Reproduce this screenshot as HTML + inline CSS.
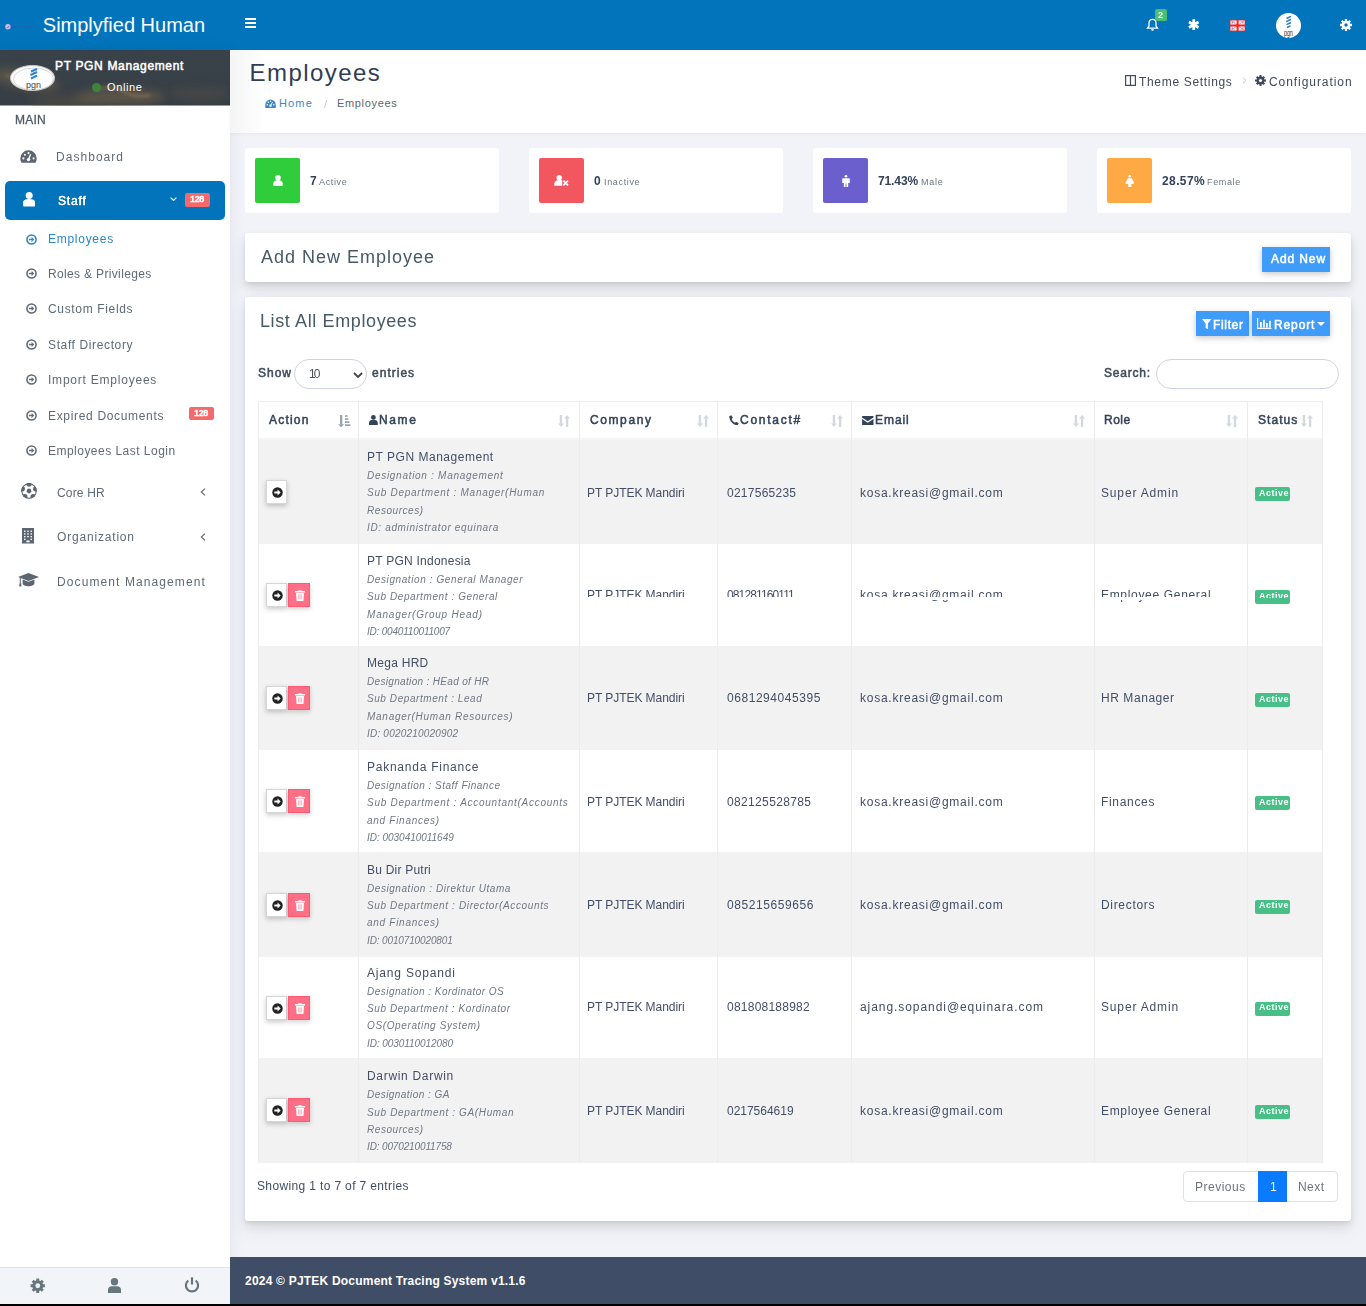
<!DOCTYPE html>
<html><head><meta charset="utf-8"><style>
*{box-sizing:border-box;margin:0;padding:0}
html,body{width:1366px;height:1306px;overflow:hidden;background:#000}
body{font-family:"Liberation Sans",sans-serif;position:relative}
.abs{position:absolute}
.t{position:absolute;white-space:nowrap;will-change:transform}
.lcd{will-change:auto}
svg{display:block}
#page{position:absolute;left:0;top:0;width:1366px;height:1304px;background:#f2f3f8;overflow:hidden}
.card{position:absolute;background:#fff;border-radius:3px}
.shadow{box-shadow:0 5px 9px rgba(90,97,105,.14),0 10px 18px rgba(90,97,105,.08),0 2px 3px rgba(90,97,105,.1)}
.vbtn{position:absolute;width:21px;height:24px;background:#fff;border:1px solid #d6d6d6;box-shadow:0 2px 5px rgba(0,0,0,.22)}
.dbtn{position:absolute;width:22px;height:24px;background:#ff6f85;border:1px solid #ff5a72;box-shadow:0 2px 5px rgba(0,0,0,.18)}
.badge{position:absolute;width:35px;height:14px;background:#48bf87;border-radius:2px}
.bluebtn{position:absolute;background:#3f9cfb;box-shadow:0 2px 6px rgba(0,0,0,.22)}
</style></head>
<body><div id="page">
<div class="abs" style="left:0;top:0;width:1366px;height:50px;background:#0174bb"></div>
<svg class="abs" style="left:4px;top:23px" width="34" height="8" viewBox="0 0 34 8"><circle cx="3.9" cy="3.8" r="2.7" fill="#cdb9e6"/><path d="M2.6 3.9l1 1 1.8-2" stroke="#7b5cc0" stroke-width=".8" fill="none"/><path d="M8 4.2h24" stroke="#5b4a9c" stroke-width="1.6" stroke-dasharray="1.5 .8" opacity=".7"/></svg>
<div class="t lcd" style="left:42.8px;top:9.87px;font-size:20px;line-height:30px;font-weight:400;color:#fff;">Simplyfied Human</div>
<svg class="abs" style="left:245px;top:18px" width="11" height="10" viewBox="0 0 11 10"><rect y="0" width="11" height="2" fill="#fff"/><rect y="4" width="11" height="2" fill="#fff"/><rect y="8" width="11" height="2" fill="#fff"/></svg>
<svg class="abs" style="left:1146px;top:18px" width="13" height="13" viewBox="0 0 13 13"><path d="M6.5 1.3c2.2 0 3.5 1.7 3.5 3.7v3.1l1.5 2H1.5l1.5-2V5c0-2 1.3-3.7 3.5-3.7z" fill="none" stroke="#fff" stroke-width="1.3"/><path d="M5 11.3a1.5 1.5 0 0 0 3 0z" fill="#fff"/></svg>
<div class="abs" style="left:1155px;top:9px;width:12px;height:12px;background:#4dbd74;border-radius:2px"></div>
<div class="t" style="left:1158.4px;top:8.48px;font-size:9px;line-height:14px;font-weight:700;letter-spacing:0.125px;color:#fff;">2</div>
<svg class="abs" style="left:1188.3px;top:18.8px" width="11.5" height="11.5" viewBox="0 0 12 12"><path d="M6 0.3v11.4M1 3.1l10 5.8M1 8.9l10-5.8" stroke="#fff" stroke-width="2.8"/></svg>
<svg class="abs" style="left:1230.2px;top:19.9px" width="15.2" height="11" viewBox="0 0 15.2 11"><rect width="15.2" height="11" fill="#f4f6ff"/><g fill="#7f9ae8"><path d="M1.8 1.6h3.4l-3.4 2.4z"/><path d="M13.4 1.6h-3.4l3.4 2.4z"/><path d="M1.8 9.4h3.4l-3.4-2.4z"/><path d="M13.4 9.4h-3.4l3.4-2.4z"/></g><path d="M0 0L15.2 11M15.2 0L0 11" stroke="#ff8a8a" stroke-width="1"/><path d="M7.6 0v11M0 5.5h15.2" stroke="#ff2020" stroke-width="2"/><rect x=".4" y=".4" width="14.4" height="10.2" fill="none" stroke="#d04040" stroke-width=".8" opacity=".6"/></svg>
<div class="abs" style="left:1276px;top:13px;width:25px;height:25px;border-radius:50%;background:#fff;overflow:hidden"><svg width="25" height="25" viewBox="0 0 25 25"><path d="M10.5 5.5l4.5-2.2M10.2 8.6l4.8-2.3M10.5 11.7l4.5-2.2M11 14.5l3.5-1.7" stroke="#2a7cc4" stroke-width="1.5" fill="none"/><text x="12.5" y="22.8" font-size="9.5" text-anchor="middle" fill="#333" font-family="Liberation Sans" textLength="9" lengthAdjust="spacingAndGlyphs">pgn</text></svg></div>
<svg class="abs" style="left:1340px;top:19px" width="12" height="12" viewBox="0 0 12 12"><circle cx="6" cy="6" r="4.3" fill="#fff"/><path d="M6 0v12M0 6h12M1.8 1.8l8.4 8.4M10.2 1.8l-8.4 8.4" stroke="#fff" stroke-width="2.3"/><circle cx="6" cy="6" r="1.7" fill="#0174bb"/></svg>
<div class="abs" style="left:0;top:50px;width:230px;height:1254px;background:#fff;box-shadow:1px 0 14px rgba(0,0,0,.07)"></div>
<svg class="abs" style="left:0;top:50px" width="230" height="55.5" viewBox="0 0 230 55.5">
<defs><linearGradient id="sky" x1="0" y1="0" x2="0" y2="1"><stop offset="0" stop-color="#3a4249"/><stop offset=".5" stop-color="#394148"/><stop offset="1" stop-color="#363d44"/></linearGradient>
<filter id="bl" x="-50%" y="-50%" width="200%" height="200%"><feGaussianBlur stdDeviation="4"/></filter>
<filter id="bl2" x="-50%" y="-50%" width="200%" height="200%"><feGaussianBlur stdDeviation="1.5"/></filter></defs>
<rect width="230" height="55.5" fill="url(#sky)"/>
<g filter="url(#bl)">
<ellipse cx="25" cy="30" rx="35" ry="9" fill="#6e6048" opacity=".55" transform="rotate(12 25 30)"/>
<ellipse cx="120" cy="47" rx="45" ry="8" fill="#77654a" opacity=".55"/>
<ellipse cx="70" cy="52" rx="40" ry="6" fill="#5e5444" opacity=".5"/>
<ellipse cx="200" cy="44" rx="30" ry="7" fill="#4f4e4c" opacity=".5"/>
</g>
<g filter="url(#bl2)" opacity=".45">
<path d="M95 40 q15 -6 30 2 q10 6 25 3" stroke="#9c8458" stroke-width="3" fill="none"/>
<path d="M5 25 q20 4 35 14" stroke="#8a7652" stroke-width="2.5" fill="none"/>
</g></svg>
<div class="abs" style="left:10px;top:65px;width:45px;height:26px;border-radius:50%;background:#fff;border:1px solid #c8c8c8;overflow:hidden"><svg width="45" height="26" viewBox="0 0 45 26"><ellipse cx="22.5" cy="13" rx="20" ry="11" fill="none" stroke="#999" stroke-width=".4"/><path d="M20 5.5l6-2.5M19.5 9l6.5-3M20 12.5l6-2.8" stroke="#2a84d0" stroke-width="2" fill="none"/><text x="22.5" y="21.5" font-size="9" text-anchor="middle" fill="#444" font-family="Liberation Sans" textLength="15" lengthAdjust="spacingAndGlyphs">pgn</text></svg></div>
<div class="t lcd" style="left:55.0px;top:56.84px;font-size:12px;line-height:18px;font-weight:400;-webkit-text-stroke:0.5px #fff;letter-spacing:0.658px;color:#fff;">PT PGN Management</div>
<div class="abs" style="left:92px;top:82.5px;width:9px;height:9px;border-radius:50%;background:#3b843a"></div>
<div class="t lcd" style="left:107.0px;top:79.19px;font-size:11px;line-height:16px;font-weight:400;letter-spacing:0.634px;color:#fff;">Online</div>
<div class="t" style="left:15.0px;top:111.24px;font-size:12px;line-height:18px;font-weight:400;-webkit-text-stroke:0.3px #4f5b66;letter-spacing:0.260px;color:#4f5b66;">MAIN</div>
<svg class="abs" style="left:20px;top:149.5px" width="17" height="13" viewBox="0 0 17 13"><path d="M8.5 0.3A8.2 8.2 0 0 0 0.3 8.5c0 1.6.4 3 1.2 4.2h14c.8-1.2 1.2-2.6 1.2-4.2A8.2 8.2 0 0 0 8.5 0.3z" fill="#5b6670"/><circle cx="8.5" cy="9.6" r="1.7" fill="#fff"/><path d="M8.5 9.6L10.6 4.2" stroke="#fff" stroke-width="1.3"/><circle cx="3.4" cy="8.4" r="1.05" fill="#fff"/><circle cx="4.9" cy="4.7" r="1.05" fill="#fff"/><circle cx="8.5" cy="3.1" r="1.05" fill="#fff"/><circle cx="13.6" cy="8.4" r="1.05" fill="#fff"/></svg>
<div class="t" style="left:56.4px;top:148.24px;font-size:12px;line-height:18px;font-weight:400;letter-spacing:1.041px;color:#5e6b75;">Dashboard</div>
<div class="abs" style="left:5px;top:181px;width:220px;height:38.5px;background:#0174bb;border-radius:5px"></div>
<svg class="abs" style="left:22.6px;top:192px" width="12.4" height="14.5" viewBox="0 0 12.4 14.5"><circle cx="6.2" cy="3.6" r="3.5" fill="#fff"/><path d="M0 13.2V10.6C0 8.2 2.6 7 6.2 7S12.4 8.2 12.4 10.6V13.2A1.3 1.3 0 0 1 11.1 14.5H1.3A1.3 1.3 0 0 1 0 13.2z" fill="#fff"/></svg>
<div class="t" style="left:57.6px;top:191.54px;font-size:12px;line-height:18px;font-weight:400;-webkit-text-stroke:0.3px #fff;letter-spacing:0.840px;color:#fff;text-shadow:0 0 .4px #fff;">Staff</div>
<svg class="abs" style="left:170px;top:197px" width="7" height="5" viewBox="0 0 7 5"><path d="M.6.6l2.9 2.9L6.4.6" stroke="#fff" stroke-width="1.2" fill="none"/></svg>
<div class="abs" style="left:185px;top:193px;width:25px;height:13.5px;background:#f46a6a;border-radius:2px"></div>
<div class="t" style="left:190.0px;top:191.88px;font-size:9px;line-height:14px;font-weight:700;letter-spacing:-0.336px;color:#fff;-webkit-text-stroke:.3px #fff;">128</div>
<svg class="abs" style="left:25.5px;top:233.5px" width="11" height="11" viewBox="0 0 12 12"><circle cx="6" cy="6" r="5" fill="none" stroke="#2a86c8" stroke-width="1.7"/><path d="M3.2 5.2h2.9V3.2L9 6 6.1 8.8V6.8H3.2z" fill="#2a86c8"/></svg>
<div class="t" style="left:48.2px;top:230.24px;font-size:12px;line-height:18px;font-weight:400;letter-spacing:0.725px;color:#2a86c8;">Employees</div>
<svg class="abs" style="left:25.5px;top:268.4px" width="11" height="11" viewBox="0 0 12 12"><circle cx="6" cy="6" r="5" fill="none" stroke="#5e6b75" stroke-width="1.7"/><path d="M3.2 5.2h2.9V3.2L9 6 6.1 8.8V6.8H3.2z" fill="#5e6b75"/></svg>
<div class="t" style="left:48.2px;top:265.14px;font-size:12px;line-height:18px;font-weight:400;letter-spacing:0.342px;color:#5e6b75;">Roles &amp; Privileges</div>
<svg class="abs" style="left:25.5px;top:303.3px" width="11" height="11" viewBox="0 0 12 12"><circle cx="6" cy="6" r="5" fill="none" stroke="#5e6b75" stroke-width="1.7"/><path d="M3.2 5.2h2.9V3.2L9 6 6.1 8.8V6.8H3.2z" fill="#5e6b75"/></svg>
<div class="t" style="left:48.2px;top:300.04px;font-size:12px;line-height:18px;font-weight:400;letter-spacing:0.659px;color:#5e6b75;">Custom Fields</div>
<svg class="abs" style="left:25.5px;top:339.1px" width="11" height="11" viewBox="0 0 12 12"><circle cx="6" cy="6" r="5" fill="none" stroke="#5e6b75" stroke-width="1.7"/><path d="M3.2 5.2h2.9V3.2L9 6 6.1 8.8V6.8H3.2z" fill="#5e6b75"/></svg>
<div class="t" style="left:48.2px;top:335.84px;font-size:12px;line-height:18px;font-weight:400;letter-spacing:0.624px;color:#5e6b75;">Staff Directory</div>
<svg class="abs" style="left:25.5px;top:374.1px" width="11" height="11" viewBox="0 0 12 12"><circle cx="6" cy="6" r="5" fill="none" stroke="#5e6b75" stroke-width="1.7"/><path d="M3.2 5.2h2.9V3.2L9 6 6.1 8.8V6.8H3.2z" fill="#5e6b75"/></svg>
<div class="t" style="left:48.2px;top:370.84px;font-size:12px;line-height:18px;font-weight:400;letter-spacing:0.775px;color:#5e6b75;">Import Employees</div>
<svg class="abs" style="left:25.5px;top:410.0px" width="11" height="11" viewBox="0 0 12 12"><circle cx="6" cy="6" r="5" fill="none" stroke="#5e6b75" stroke-width="1.7"/><path d="M3.2 5.2h2.9V3.2L9 6 6.1 8.8V6.8H3.2z" fill="#5e6b75"/></svg>
<div class="t" style="left:48.2px;top:406.74px;font-size:12px;line-height:18px;font-weight:400;letter-spacing:0.671px;color:#5e6b75;">Expired Documents</div>
<svg class="abs" style="left:25.5px;top:444.9px" width="11" height="11" viewBox="0 0 12 12"><circle cx="6" cy="6" r="5" fill="none" stroke="#5e6b75" stroke-width="1.7"/><path d="M3.2 5.2h2.9V3.2L9 6 6.1 8.8V6.8H3.2z" fill="#5e6b75"/></svg>
<div class="t" style="left:48.2px;top:441.64px;font-size:12px;line-height:18px;font-weight:400;letter-spacing:0.475px;color:#5e6b75;">Employees Last Login</div>
<div class="abs" style="left:189px;top:407.4px;width:25px;height:12.5px;background:#f46a6a;border-radius:2px"></div>
<div class="t" style="left:194.0px;top:405.68px;font-size:9px;line-height:14px;font-weight:700;letter-spacing:-0.336px;color:#fff;-webkit-text-stroke:.3px #fff;">128</div>
<svg class="abs" style="left:20.6px;top:483px" width="16" height="16" viewBox="0 0 16 16"><defs><clipPath id="ball"><circle cx="8" cy="8" r="7.9"/></clipPath></defs><g clip-path="url(#ball)"><circle cx="8" cy="8" r="8" fill="#5b6670"/><circle cx="8" cy="8" r="6.7" fill="#fff"/><polygon points="8.00,10.70 5.43,8.83 6.41,5.82 9.59,5.82 10.57,8.83" fill="#5b6670"/><circle cx="8.00" cy="1.00" r="2.6" fill="#5b6670"/><circle cx="14.66" cy="5.84" r="2.6" fill="#5b6670"/><circle cx="12.11" cy="13.66" r="2.6" fill="#5b6670"/><circle cx="3.89" cy="13.66" r="2.6" fill="#5b6670"/><circle cx="1.34" cy="5.84" r="2.6" fill="#5b6670"/></g></svg>
<div class="t" style="left:57.3px;top:484.14px;font-size:12px;line-height:18px;font-weight:400;letter-spacing:0.164px;color:#5e6b75;">Core HR</div>
<svg class="abs" style="left:200px;top:488px" width="6" height="8" viewBox="0 0 6 8"><path d="M5 .6L1.3 4 5 7.4" stroke="#5b6670" stroke-width="1.1" fill="none"/></svg>
<svg class="abs" style="left:22px;top:528.3px" width="12" height="15.5" viewBox="0 0 12 15.5"><rect width="12" height="15.5" fill="#5b6670"/><g fill="#fff"><rect x="2" y="2.6" width="1.5" height="1.3"/><rect x="5.2" y="2.6" width="1.5" height="1.3"/><rect x="8.5" y="2.6" width="1.5" height="1.3"/><rect x="2" y="5.3" width="1.5" height="1.3"/><rect x="5.2" y="5.3" width="1.5" height="1.3"/><rect x="8.5" y="5.3" width="1.5" height="1.3"/><rect x="2" y="8" width="1.5" height="1.3"/><rect x="5.2" y="8" width="1.5" height="1.3"/><rect x="8.5" y="8" width="1.5" height="1.3"/><rect x="2" y="10.7" width="1.5" height="1.3"/><rect x="8.5" y="10.7" width="1.5" height="1.3"/><rect x="4.3" y="12.4" width="3.4" height="1.8" rx=".6"/></g></svg>
<div class="t" style="left:57.3px;top:528.44px;font-size:12px;line-height:18px;font-weight:400;letter-spacing:0.817px;color:#5e6b75;">Organization</div>
<svg class="abs" style="left:200px;top:532.5px" width="6" height="8" viewBox="0 0 6 8"><path d="M5 .6L1.3 4 5 7.4" stroke="#5b6670" stroke-width="1.1" fill="none"/></svg>
<svg class="abs" style="left:18px;top:573px" width="21" height="14" viewBox="0 0 21 14"><path d="M10.5 0L21 4l-10.5 4L0 4z" fill="#5b6670"/><path d="M4.6 6.4v3.8c0 1.8 2.8 3 5.9 3s5.9-1.2 5.9-3V6.4l-5.9 2.3z" fill="#5b6670"/><path d="M2.3 4.6v6.2" stroke="#5b6670" stroke-width="1"/><rect x="1.3" y="10.5" width="2" height="3" fill="#5b6670"/></svg>
<div class="abs" style="left:0;top:570px;width:205px;height:22px;overflow:hidden">
<div class="t" style="left:57.3px;top:2.64px;font-size:12px;line-height:18px;font-weight:400;letter-spacing:1.097px;color:#5e6b75;">Document Management</div>
</div>
<div class="abs" style="left:0;top:1267px;width:230px;height:37px;background:#f1f4f8;border-top:1px solid #e1e5ea"></div>
<svg class="abs" style="left:30.3px;top:1278px" width="15.5" height="15.5" viewBox="0 0 16 16"><circle cx="8" cy="8" r="5.6" fill="#67757c"/><path d="M8 0.6v14.8M0.6 8h14.8M2.8 2.8l10.4 10.4M13.2 2.8L2.8 13.2" stroke="#67757c" stroke-width="3"/><circle cx="8" cy="8" r="2.5" fill="#f1f4f8"/></svg>
<svg class="abs" style="left:108px;top:1278px" width="13" height="15" viewBox="0 0 13 15"><circle cx="6.5" cy="3.7" r="3.7" fill="#67757c"/><path d="M0 15v-3.2C0 9.5 1.8 8.3 3.6 8.3h5.8c1.8 0 3.6 1.2 3.6 3.5V15z" fill="#67757c"/></svg>
<svg class="abs" style="left:183.8px;top:1277px" width="16" height="16" viewBox="0 0 16 16"><path d="M4.3 3.5A6.1 6.1 0 1 0 11.7 3.5" stroke="#67757c" stroke-width="2.2" fill="none"/><path d="M8 0.3v7.2" stroke="#67757c" stroke-width="2.2"/></svg>
<div class="abs" style="left:230px;top:50px;width:1136px;height:83px;background:#fff;box-shadow:0 1px 3px rgba(0,0,0,.05)"></div>
<div class="t lcd" style="left:249.5px;top:55.08px;font-size:24px;line-height:36px;font-weight:400;letter-spacing:1.449px;color:#2f3d55;">Employees</div>
<div class="abs" style="left:230px;top:50px;width:34px;height:83px;background:linear-gradient(to right,rgba(40,45,60,.05),rgba(40,45,60,0))"></div>
<svg class="abs" style="left:265px;top:98.5px" width="11" height="9.5" viewBox="0 0 12 10"><path d="M6 0.4A5.7 5.7 0 0 0 0.3 6.1V9.6H11.7V6.1A5.7 5.7 0 0 0 6 0.4z" fill="#3a87c8"/><circle cx="6" cy="7.1" r="1.3" fill="#fff"/><path d="M6 7.1L8.2 3.2" stroke="#fff" stroke-width="1"/><circle cx="2.5" cy="6.1" r=".85" fill="#fff"/><circle cx="3.6" cy="3.3" r=".85" fill="#fff"/><circle cx="6" cy="2.3" r=".85" fill="#fff"/><circle cx="9.5" cy="6.1" r=".85" fill="#fff"/></svg>
<div class="t lcd" style="left:279.0px;top:95.19px;font-size:11px;line-height:16px;font-weight:400;letter-spacing:1.156px;color:#3a87c8;">Home</div>
<div class="t" style="left:324.0px;top:95.69px;font-size:11px;line-height:16px;font-weight:400;letter-spacing:2.188px;color:#c3c9d0;">/</div>
<div class="t lcd" style="left:337.0px;top:95.19px;font-size:11px;line-height:16px;font-weight:400;letter-spacing:0.664px;color:#5b6670;">Employees</div>
<svg class="abs" style="left:1124.5px;top:74.5px" width="11" height="11" viewBox="0 0 11 11"><rect x=".6" y=".6" width="9.8" height="9.8" fill="none" stroke="#3e4b5b" stroke-width="1.2"/><path d="M5.5 .6v9.8" stroke="#3e4b5b" stroke-width="1.2"/></svg>
<div class="t" style="left:1139.0px;top:72.54px;font-size:12px;line-height:18px;font-weight:400;letter-spacing:0.678px;color:#3e4b5b;">Theme Settings</div>
<svg class="abs" style="left:1241.5px;top:77px" width="5" height="7" viewBox="0 0 5 7"><path d="M.8.6L4 3.5.8 6.4" stroke="#c3c9d0" stroke-width="1" fill="none"/></svg>
<svg class="abs" style="left:1254.5px;top:74.5px" width="11" height="11" viewBox="0 0 12 12"><circle cx="6" cy="6" r="4.3" fill="#3e4b5b"/><path d="M6 0v12M0 6h12M1.8 1.8l8.4 8.4M10.2 1.8l-8.4 8.4" stroke="#3e4b5b" stroke-width="2.3"/><circle cx="6" cy="6" r="1.7" fill="#fff"/></svg>
<div class="t" style="left:1268.8px;top:72.54px;font-size:12px;line-height:18px;font-weight:400;letter-spacing:0.934px;color:#3e4b5b;">Configuration</div>
<div class="card" style="left:245px;top:148px;width:254px;height:65px"></div>
<div class="abs" style="left:255px;top:158px;width:45px;height:45px;border-radius:2px;background:#2fcc3b"><svg class="abs" style="left:18px;top:17px" width="10" height="11" viewBox="0 0 10 11"><circle cx="5" cy="2.8" r="2.8" fill="#fff"/><path d="M0.3 11V8.6C0.3 6.4 2.4 5.1 5 5.1S9.7 6.4 9.7 8.6V11z" fill="#fff"/></svg></div>
<div class="t" style="left:310.1px;top:171.74px;font-size:12px;line-height:18px;font-weight:700;letter-spacing:-0.266px;color:#34425a;">7</div>
<div class="t" style="left:319.2px;top:174.78px;font-size:9px;line-height:14px;font-weight:400;letter-spacing:0.628px;color:#6c757d;">Active</div>
<div class="card" style="left:529px;top:148px;width:254px;height:65px"></div>
<div class="abs" style="left:539px;top:158px;width:45px;height:45px;border-radius:2px;background:#f2565f"><svg class="abs" style="left:15px;top:17px" width="15" height="11" viewBox="0 0 15 11"><circle cx="5.2" cy="2.7" r="2.7" fill="#fff"/><path d="M0.3 10.8V8.4C0.3 6.3 2.4 5 5 5S8.2 5.4 8.2 5.4V10.8z" fill="#fff"/><path d="M9.4 5.6l4.6 4.8M14 5.6l-4.6 4.8" stroke="#fff" stroke-width="1.7"/></svg></div>
<div class="t" style="left:594.4px;top:171.74px;font-size:12px;line-height:18px;font-weight:700;letter-spacing:1.141px;color:#34425a;">0</div>
<div class="t" style="left:604.4px;top:174.78px;font-size:9px;line-height:14px;font-weight:400;letter-spacing:0.658px;color:#6c757d;">Inactive</div>
<div class="card" style="left:813px;top:148px;width:254px;height:65px"></div>
<div class="abs" style="left:823px;top:158px;width:45px;height:45px;border-radius:2px;background:#6a5fcc"><svg class="abs" style="left:18.5px;top:16.8px" width="8" height="12.2" viewBox="0 0 8 12.2"><circle cx="4" cy="1.2" r="1.3" fill="#fff"/><path d="M1 3.2h6a.8.8 0 0 1 .8.8V8H6.2V12.1H4.4V8.6H3.6V12.1H1.8V8H.2V4a.8.8 0 0 1 .8-.8z" fill="#fff"/></svg></div>
<div class="t" style="left:878.0px;top:171.74px;font-size:12px;line-height:18px;font-weight:700;letter-spacing:-0.113px;color:#34425a;">71.43%</div>
<div class="t" style="left:921.0px;top:174.78px;font-size:9px;line-height:14px;font-weight:400;letter-spacing:0.708px;color:#6c757d;">Male</div>
<div class="card" style="left:1097px;top:148px;width:254px;height:65px"></div>
<div class="abs" style="left:1107px;top:158px;width:45px;height:45px;border-radius:2px;background:#ffa944"><svg class="abs" style="left:17.8px;top:16.8px" width="9.6" height="12.4" viewBox="0 0 9.6 12.4"><circle cx="4.8" cy="1.2" r="1.3" fill="#fff"/><path d="M3 3.2h3.6l3 5.2H7.8l.6 .6H6.3v3.3H3.3V9H1.2l.6-.6H0z" fill="#fff"/></svg></div>
<div class="t" style="left:1161.8px;top:171.74px;font-size:12px;line-height:18px;font-weight:700;letter-spacing:0.397px;color:#34425a;">28.57%</div>
<div class="t" style="left:1207.4px;top:174.78px;font-size:9px;line-height:14px;font-weight:400;letter-spacing:0.650px;color:#6c757d;">Female</div>
<div class="card shadow" style="left:245px;top:233px;width:1106px;height:49px"></div>
<div class="t" style="left:260.5px;top:243.86px;font-size:18px;line-height:27px;font-weight:400;letter-spacing:0.994px;color:#455a64;">Add New Employee</div>
<div class="bluebtn" style="left:1262px;top:247px;width:68px;height:25px"></div>
<div class="t" style="left:1271.0px;top:250.24px;font-size:12px;line-height:18px;font-weight:400;-webkit-text-stroke:0.5px #fff;letter-spacing:0.896px;color:#fff;">Add New</div>
<div class="card shadow" style="left:245px;top:297px;width:1106px;height:924px"></div>
<div class="t" style="left:260.2px;top:308.26px;font-size:18px;line-height:27px;font-weight:400;letter-spacing:0.613px;color:#455a64;">List All Employees</div>
<div class="bluebtn" style="left:1196px;top:311px;width:53px;height:25px"></div>
<svg class="abs" style="left:1202px;top:318.5px" width="9.5" height="10.5" viewBox="0 0 10 11"><path d="M0 0h10L6.2 4.8V11L3.8 9.2V4.8z" fill="#fff"/></svg>
<div class="t" style="left:1213.3px;top:315.54px;font-size:12px;line-height:18px;font-weight:400;-webkit-text-stroke:0.5px #fff;letter-spacing:0.656px;color:#fff;">Filter</div>
<div class="bluebtn" style="left:1252px;top:311px;width:78px;height:25px"></div>
<svg class="abs" style="left:1257px;top:318px" width="14.5" height="11" viewBox="0 0 14.5 11"><path d="M.6 0v10.4H14.5" stroke="#fff" stroke-width="1.2" fill="none"/><rect x="3" y="4" width="1.8" height="5.6" fill="#fff"/><rect x="6" y="1.8" width="1.8" height="7.8" fill="#fff"/><rect x="9" y="5" width="1.8" height="4.6" fill="#fff"/><rect x="12" y="2.8" width="1.8" height="6.8" fill="#fff"/></svg>
<div class="t" style="left:1274.4px;top:315.54px;font-size:12px;line-height:18px;font-weight:400;-webkit-text-stroke:0.5px #fff;letter-spacing:0.875px;color:#fff;">Report</div>
<svg class="abs" style="left:1317px;top:322px" width="8" height="4" viewBox="0 0 8 4"><path d="M0 0h8L4 4z" fill="#fff"/></svg>
<div class="t" style="left:258.0px;top:363.74px;font-size:12px;line-height:18px;font-weight:400;-webkit-text-stroke:0.5px #3e4b5b;letter-spacing:1.000px;color:#3e4b5b;">Show</div>
<div class="abs" style="left:293.5px;top:359.3px;width:73.5px;height:29.3px;border:1px solid #cdd3e0;border-radius:15px;background:#fff"></div>
<div class="t" style="left:308.6px;top:365.14px;font-size:12px;line-height:18px;font-weight:400;letter-spacing:-1.969px;color:#495057;">10</div>
<svg class="abs" style="left:353px;top:371.5px" width="10" height="6.5" viewBox="0 0 10 6.5"><path d="M1 1l4 4 4-4" stroke="#444" stroke-width="1.8" fill="none"/></svg>
<div class="t" style="left:371.5px;top:363.74px;font-size:12px;line-height:18px;font-weight:400;-webkit-text-stroke:0.5px #3e4b5b;letter-spacing:1.016px;color:#3e4b5b;">entries</div>
<div class="t" style="left:1103.8px;top:363.84px;font-size:12px;line-height:18px;font-weight:400;-webkit-text-stroke:0.5px #3e4b5b;letter-spacing:0.776px;color:#3e4b5b;">Search:</div>
<div class="abs" style="left:1156px;top:359px;width:182.5px;height:29.6px;border:1px solid #cdd3e0;border-radius:15px;background:#fff"></div>
<div class="abs" style="left:258px;top:400.5px;width:1065px;height:37.5px;background:#fff;border-top:1px solid #eceef1"></div>
<div class="abs" style="left:258px;top:438px;width:1065px;height:106.0px;background:#f2f2f2"></div>
<div class="abs" style="left:258px;top:544px;width:1065px;height:102.0px;background:#ffffff"></div>
<div class="abs" style="left:258px;top:646px;width:1065px;height:104.0px;background:#f2f2f2"></div>
<div class="abs" style="left:258px;top:750px;width:1065px;height:102.0px;background:#ffffff"></div>
<div class="abs" style="left:258px;top:852px;width:1065px;height:105.0px;background:#f2f2f2"></div>
<div class="abs" style="left:258px;top:957px;width:1065px;height:101.0px;background:#ffffff"></div>
<div class="abs" style="left:258px;top:1058px;width:1065px;height:104.5px;background:#f2f2f2"></div>
<div class="abs" style="left:258px;top:438px;width:1065px;height:2px;background:#f5f5f5"></div>
<div class="abs" style="left:258px;top:400.5px;width:1px;height:762px;background:#ececec"></div>
<div class="abs" style="left:358px;top:400.5px;width:1px;height:762px;background:#ececec"></div>
<div class="abs" style="left:579px;top:400.5px;width:1px;height:762px;background:#ececec"></div>
<div class="abs" style="left:717px;top:400.5px;width:1px;height:762px;background:#ececec"></div>
<div class="abs" style="left:851px;top:400.5px;width:1px;height:762px;background:#ececec"></div>
<div class="abs" style="left:1094px;top:400.5px;width:1px;height:762px;background:#ececec"></div>
<div class="abs" style="left:1247px;top:400.5px;width:1px;height:762px;background:#ececec"></div>
<div class="abs" style="left:1322px;top:400.5px;width:1px;height:762px;background:#ececec"></div>
<div class="t" style="left:269.0px;top:411.24px;font-size:12px;line-height:18px;font-weight:400;-webkit-text-stroke:0.5px #34425a;letter-spacing:1.209px;color:#34425a;">Action</div>
<div class="t" style="left:379.4px;top:411.24px;font-size:12px;line-height:18px;font-weight:400;-webkit-text-stroke:0.5px #34425a;letter-spacing:1.641px;color:#34425a;">Name</div>
<div class="t" style="left:590.0px;top:411.24px;font-size:12px;line-height:18px;font-weight:400;-webkit-text-stroke:0.5px #34425a;letter-spacing:1.594px;color:#34425a;">Company</div>
<div class="t" style="left:740.4px;top:411.24px;font-size:12px;line-height:18px;font-weight:400;-webkit-text-stroke:0.5px #34425a;letter-spacing:1.728px;color:#34425a;">Contact#</div>
<div class="t" style="left:875.4px;top:411.24px;font-size:12px;line-height:18px;font-weight:400;-webkit-text-stroke:0.5px #34425a;letter-spacing:0.941px;color:#34425a;">Email</div>
<div class="t" style="left:1104.3px;top:411.24px;font-size:12px;line-height:18px;font-weight:400;-webkit-text-stroke:0.5px #34425a;letter-spacing:0.469px;color:#34425a;">Role</div>
<div class="t" style="left:1257.6px;top:411.24px;font-size:12px;line-height:18px;font-weight:400;-webkit-text-stroke:0.5px #34425a;letter-spacing:1.041px;color:#34425a;">Status</div>
<svg class="abs" style="left:338px;top:414.8px" width="13" height="12.5" viewBox="0 0 13 12.5"><rect x="2" y="0" width="2.3" height="9.6" fill="#98a2b3"/><path d="M0.2 9.2h5.9L3.15 12.3z" fill="#98a2b3"/><rect x="7" y=".2" width="2.6" height="1.7" fill="#98a2b3"/><rect x="7" y="3.3" width="3.3" height="1.7" fill="#98a2b3"/><rect x="7" y="6.3" width="4.4" height="1.7" fill="#98a2b3"/><rect x="7" y="9.3" width="5.5" height="1.7" fill="#98a2b3"/></svg>
<svg class="abs" style="left:557.9px;top:415px" width="12" height="12" viewBox="0 0 11 12" preserveAspectRatio="none"><rect x="1.6" y="0" width="2.2" height="8.8" fill="#d3d8de"/><path d="M0 8.4h5.4L2.7 12z" fill="#d3d8de"/><rect x="7.2" y="3.2" width="2.2" height="8.8" fill="#d3d8de"/><path d="M5.6 3.6h5.4L8.3 0z" fill="#d3d8de"/></svg>
<svg class="abs" style="left:697.0px;top:415px" width="12" height="12" viewBox="0 0 11 12" preserveAspectRatio="none"><rect x="1.6" y="0" width="2.2" height="8.8" fill="#d3d8de"/><path d="M0 8.4h5.4L2.7 12z" fill="#d3d8de"/><rect x="7.2" y="3.2" width="2.2" height="8.8" fill="#d3d8de"/><path d="M5.6 3.6h5.4L8.3 0z" fill="#d3d8de"/></svg>
<svg class="abs" style="left:831.1px;top:415px" width="12" height="12" viewBox="0 0 11 12" preserveAspectRatio="none"><rect x="1.6" y="0" width="2.2" height="8.8" fill="#d3d8de"/><path d="M0 8.4h5.4L2.7 12z" fill="#d3d8de"/><rect x="7.2" y="3.2" width="2.2" height="8.8" fill="#d3d8de"/><path d="M5.6 3.6h5.4L8.3 0z" fill="#d3d8de"/></svg>
<svg class="abs" style="left:1073.4px;top:415px" width="12" height="12" viewBox="0 0 11 12" preserveAspectRatio="none"><rect x="1.6" y="0" width="2.2" height="8.8" fill="#d3d8de"/><path d="M0 8.4h5.4L2.7 12z" fill="#d3d8de"/><rect x="7.2" y="3.2" width="2.2" height="8.8" fill="#d3d8de"/><path d="M5.6 3.6h5.4L8.3 0z" fill="#d3d8de"/></svg>
<svg class="abs" style="left:1226.4px;top:415px" width="12" height="12" viewBox="0 0 11 12" preserveAspectRatio="none"><rect x="1.6" y="0" width="2.2" height="8.8" fill="#d3d8de"/><path d="M0 8.4h5.4L2.7 12z" fill="#d3d8de"/><rect x="7.2" y="3.2" width="2.2" height="8.8" fill="#d3d8de"/><path d="M5.6 3.6h5.4L8.3 0z" fill="#d3d8de"/></svg>
<svg class="abs" style="left:1300.9px;top:415px" width="12" height="12" viewBox="0 0 11 12" preserveAspectRatio="none"><rect x="1.6" y="0" width="2.2" height="8.8" fill="#d3d8de"/><path d="M0 8.4h5.4L2.7 12z" fill="#d3d8de"/><rect x="7.2" y="3.2" width="2.2" height="8.8" fill="#d3d8de"/><path d="M5.6 3.6h5.4L8.3 0z" fill="#d3d8de"/></svg>
<svg class="abs" style="left:369.2px;top:414.6px" width="8.8" height="10.5" viewBox="0 0 8.8 10.5"><circle cx="4.4" cy="2.4" r="2.4" fill="#34425a"/><path d="M0 9.3V8C0 6 1.9 4.8 4.4 4.8S8.8 6 8.8 8V9.3a1.2 1.2 0 0 1-1.2 1.2H1.2A1.2 1.2 0 0 1 0 9.3z" fill="#34425a"/></svg>
<svg class="abs" style="left:728.5px;top:414.5px" width="10" height="10.5" viewBox="0 0 10 11"><path d="M2.2 0.3 3.8 2.9 2.6 4.3C3.2 6 4.4 7.4 6 8.2l1.3-1.2 2.6 1.6L8.8 10.8C4 10.6 0.3 6.6 0 1.4z" fill="#34425a"/></svg>
<svg class="abs" style="left:862.4px;top:415.5px" width="11.6" height="9.5" viewBox="0 0 12 10"><path d="M0 0h12v1.6L6 5.6 0 1.6z M0 3.2l6 4 6-4V10H0z" fill="#34425a"/></svg>
<div class="vbtn" style="left:266.4px;top:480.0px"><svg class="abs" style="left:4.5px;top:6px" width="11" height="11" viewBox="0 0 16 16"><circle cx="8" cy="8" r="7.6" fill="#222"/><path d="M3.4 6.5h4.7V3.6l4.5 4.4-4.5 4.4V9.5H3.4z" fill="#fff"/></svg></div>
<div class="t" style="left:366.8px;top:448.14px;font-size:12px;line-height:18px;font-weight:400;letter-spacing:0.523px;color:#424e66;">PT PGN Management</div>
<div class="t" style="left:366.8px;top:468.14px;font-size:10px;line-height:15px;font-weight:400;font-style:italic;letter-spacing:0.711px;color:#6f7885;">Designation : Management</div>
<div class="t" style="left:366.8px;top:485.44px;font-size:10px;line-height:15px;font-weight:400;font-style:italic;letter-spacing:0.728px;color:#6f7885;">Sub Department : Manager(Human</div>
<div class="t" style="left:366.8px;top:502.74px;font-size:10px;line-height:15px;font-weight:400;font-style:italic;letter-spacing:0.547px;color:#6f7885;">Resources)</div>
<div class="t" style="left:366.8px;top:520.03px;font-size:10px;line-height:15px;font-weight:400;font-style:italic;letter-spacing:0.652px;color:#6f7885;">ID: administrator equinara</div>
<div class="t" style="left:586.8px;top:484.44px;font-size:12px;line-height:18px;font-weight:400;letter-spacing:-0.058px;color:#424e66;">PT PJTEK Mandiri</div>
<div class="t" style="left:726.5px;top:484.44px;font-size:12px;line-height:18px;font-weight:400;letter-spacing:0.253px;color:#424e66;">0217565235</div>
<div class="t" style="left:859.5px;top:484.44px;font-size:12px;line-height:18px;font-weight:400;letter-spacing:0.755px;color:#424e66;">kosa.kreasi@gmail.com</div>
<div class="t" style="left:1101.2px;top:484.44px;font-size:12px;line-height:18px;font-weight:400;letter-spacing:0.844px;color:#424e66;">Super Admin</div>
<div class="badge" style="left:1255px;top:487.0px"></div>
<div class="t" style="left:1259.2px;top:485.78px;font-size:9px;line-height:14px;font-weight:700;letter-spacing:0.512px;color:#fff;">Active</div>
<div class="vbtn" style="left:266.4px;top:583.0px"><svg class="abs" style="left:4.5px;top:6px" width="11" height="11" viewBox="0 0 16 16"><circle cx="8" cy="8" r="7.6" fill="#222"/><path d="M3.4 6.5h4.7V3.6l4.5 4.4-4.5 4.4V9.5H3.4z" fill="#fff"/></svg></div>
<div class="dbtn" style="left:288px;top:583.0px"><svg class="abs" style="left:5.5px;top:6px" width="10" height="11" viewBox="0 0 10 11"><path d="M3.5 1V.3h3V1H10v1.4H0V1z" fill="#fff"/><path d="M1 3h8l-.6 8H1.6z" fill="#fff"/><path d="M3.6 4.4v5M5 4.4v5M6.4 4.4v5" stroke="#ff8fa0" stroke-width=".7"/></svg></div>
<div class="t" style="left:366.8px;top:552.14px;font-size:12px;line-height:18px;font-weight:400;letter-spacing:0.241px;color:#424e66;">PT PGN Indonesia</div>
<div class="t" style="left:366.8px;top:572.13px;font-size:10px;line-height:15px;font-weight:400;font-style:italic;letter-spacing:0.593px;color:#6f7885;">Designation : General Manager</div>
<div class="t" style="left:366.8px;top:589.43px;font-size:10px;line-height:15px;font-weight:400;font-style:italic;letter-spacing:0.589px;color:#6f7885;">Sub Department : General</div>
<div class="t" style="left:366.8px;top:606.73px;font-size:10px;line-height:15px;font-weight:400;font-style:italic;letter-spacing:0.799px;color:#6f7885;">Manager(Group Head)</div>
<div class="t" style="left:366.8px;top:624.03px;font-size:10px;line-height:15px;font-weight:400;font-style:italic;letter-spacing:-0.201px;color:#6f7885;">ID: 0040110011007</div>
<div class="t" style="left:586.8px;top:586.44px;font-size:12px;line-height:18px;font-weight:400;letter-spacing:-0.058px;color:#424e66;">PT PJTEK Mandiri</div>
<div class="t" style="left:726.5px;top:586.44px;font-size:12px;line-height:18px;font-weight:400;letter-spacing:-0.876px;color:#424e66;">081281160111</div>
<div class="t" style="left:859.5px;top:586.44px;font-size:12px;line-height:18px;font-weight:400;letter-spacing:0.755px;color:#424e66;">kosa.kreasi@gmail.com</div>
<div class="t" style="left:1101.2px;top:586.44px;font-size:12px;line-height:18px;font-weight:400;letter-spacing:0.677px;color:#424e66;">Employee General</div>
<div class="badge" style="left:1255px;top:590.0px"></div>
<div class="t" style="left:1259.2px;top:588.78px;font-size:9px;line-height:14px;font-weight:700;letter-spacing:0.512px;color:#fff;">Active</div>
<div class="vbtn" style="left:266.4px;top:686.0px"><svg class="abs" style="left:4.5px;top:6px" width="11" height="11" viewBox="0 0 16 16"><circle cx="8" cy="8" r="7.6" fill="#222"/><path d="M3.4 6.5h4.7V3.6l4.5 4.4-4.5 4.4V9.5H3.4z" fill="#fff"/></svg></div>
<div class="dbtn" style="left:288px;top:686.0px"><svg class="abs" style="left:5.5px;top:6px" width="10" height="11" viewBox="0 0 10 11"><path d="M3.5 1V.3h3V1H10v1.4H0V1z" fill="#fff"/><path d="M1 3h8l-.6 8H1.6z" fill="#fff"/><path d="M3.6 4.4v5M5 4.4v5M6.4 4.4v5" stroke="#ff8fa0" stroke-width=".7"/></svg></div>
<div class="t" style="left:366.8px;top:654.14px;font-size:12px;line-height:18px;font-weight:400;letter-spacing:0.277px;color:#424e66;">Mega HRD</div>
<div class="t" style="left:366.8px;top:674.13px;font-size:10px;line-height:15px;font-weight:400;font-style:italic;letter-spacing:0.328px;color:#6f7885;">Designation : HEad of HR</div>
<div class="t" style="left:366.8px;top:691.43px;font-size:10px;line-height:15px;font-weight:400;font-style:italic;letter-spacing:0.570px;color:#6f7885;">Sub Department : Lead</div>
<div class="t" style="left:366.8px;top:708.73px;font-size:10px;line-height:15px;font-weight:400;font-style:italic;letter-spacing:0.724px;color:#6f7885;">Manager(Human Resources)</div>
<div class="t" style="left:366.8px;top:726.03px;font-size:10px;line-height:15px;font-weight:400;font-style:italic;letter-spacing:0.203px;color:#6f7885;">ID: 0020210020902</div>
<div class="t" style="left:586.8px;top:689.44px;font-size:12px;line-height:18px;font-weight:400;letter-spacing:-0.058px;color:#424e66;">PT PJTEK Mandiri</div>
<div class="t" style="left:726.5px;top:689.44px;font-size:12px;line-height:18px;font-weight:400;letter-spacing:0.551px;color:#424e66;">0681294045395</div>
<div class="t" style="left:859.5px;top:689.44px;font-size:12px;line-height:18px;font-weight:400;letter-spacing:0.755px;color:#424e66;">kosa.kreasi@gmail.com</div>
<div class="t" style="left:1101.2px;top:689.44px;font-size:12px;line-height:18px;font-weight:400;letter-spacing:0.561px;color:#424e66;">HR Manager</div>
<div class="badge" style="left:1255px;top:693.0px"></div>
<div class="t" style="left:1259.2px;top:691.78px;font-size:9px;line-height:14px;font-weight:700;letter-spacing:0.512px;color:#fff;">Active</div>
<div class="vbtn" style="left:266.4px;top:789.0px"><svg class="abs" style="left:4.5px;top:6px" width="11" height="11" viewBox="0 0 16 16"><circle cx="8" cy="8" r="7.6" fill="#222"/><path d="M3.4 6.5h4.7V3.6l4.5 4.4-4.5 4.4V9.5H3.4z" fill="#fff"/></svg></div>
<div class="dbtn" style="left:288px;top:789.0px"><svg class="abs" style="left:5.5px;top:6px" width="10" height="11" viewBox="0 0 10 11"><path d="M3.5 1V.3h3V1H10v1.4H0V1z" fill="#fff"/><path d="M1 3h8l-.6 8H1.6z" fill="#fff"/><path d="M3.6 4.4v5M5 4.4v5M6.4 4.4v5" stroke="#ff8fa0" stroke-width=".7"/></svg></div>
<div class="t" style="left:366.8px;top:758.14px;font-size:12px;line-height:18px;font-weight:400;letter-spacing:0.751px;color:#424e66;">Paknanda Finance</div>
<div class="t" style="left:366.8px;top:778.13px;font-size:10px;line-height:15px;font-weight:400;font-style:italic;letter-spacing:0.496px;color:#6f7885;">Designation : Staff Finance</div>
<div class="t" style="left:366.8px;top:795.43px;font-size:10px;line-height:15px;font-weight:400;font-style:italic;letter-spacing:0.728px;color:#6f7885;">Sub Department : Accountant(Accounts</div>
<div class="t" style="left:366.8px;top:812.73px;font-size:10px;line-height:15px;font-weight:400;font-style:italic;letter-spacing:0.719px;color:#6f7885;">and Finances)</div>
<div class="t" style="left:366.8px;top:830.03px;font-size:10px;line-height:15px;font-weight:400;font-style:italic;letter-spacing:-0.022px;color:#6f7885;">ID: 0030410011649</div>
<div class="t" style="left:586.8px;top:793.44px;font-size:12px;line-height:18px;font-weight:400;letter-spacing:-0.058px;color:#424e66;">PT PJTEK Mandiri</div>
<div class="t" style="left:726.5px;top:793.44px;font-size:12px;line-height:18px;font-weight:400;letter-spacing:0.351px;color:#424e66;">082125528785</div>
<div class="t" style="left:859.5px;top:793.44px;font-size:12px;line-height:18px;font-weight:400;letter-spacing:0.755px;color:#424e66;">kosa.kreasi@gmail.com</div>
<div class="t" style="left:1101.2px;top:793.44px;font-size:12px;line-height:18px;font-weight:400;letter-spacing:0.681px;color:#424e66;">Finances</div>
<div class="badge" style="left:1255px;top:796.0px"></div>
<div class="t" style="left:1259.2px;top:794.78px;font-size:9px;line-height:14px;font-weight:700;letter-spacing:0.512px;color:#fff;">Active</div>
<div class="vbtn" style="left:266.4px;top:892.5px"><svg class="abs" style="left:4.5px;top:6px" width="11" height="11" viewBox="0 0 16 16"><circle cx="8" cy="8" r="7.6" fill="#222"/><path d="M3.4 6.5h4.7V3.6l4.5 4.4-4.5 4.4V9.5H3.4z" fill="#fff"/></svg></div>
<div class="dbtn" style="left:288px;top:892.5px"><svg class="abs" style="left:5.5px;top:6px" width="10" height="11" viewBox="0 0 10 11"><path d="M3.5 1V.3h3V1H10v1.4H0V1z" fill="#fff"/><path d="M1 3h8l-.6 8H1.6z" fill="#fff"/><path d="M3.6 4.4v5M5 4.4v5M6.4 4.4v5" stroke="#ff8fa0" stroke-width=".7"/></svg></div>
<div class="t" style="left:366.8px;top:860.64px;font-size:12px;line-height:18px;font-weight:400;letter-spacing:0.220px;color:#424e66;">Bu Dir Putri</div>
<div class="t" style="left:366.8px;top:880.63px;font-size:10px;line-height:15px;font-weight:400;font-style:italic;letter-spacing:0.557px;color:#6f7885;">Designation : Direktur Utama</div>
<div class="t" style="left:366.8px;top:897.93px;font-size:10px;line-height:15px;font-weight:400;font-style:italic;letter-spacing:0.634px;color:#6f7885;">Sub Department : Director(Accounts</div>
<div class="t" style="left:366.8px;top:915.23px;font-size:10px;line-height:15px;font-weight:400;font-style:italic;letter-spacing:0.719px;color:#6f7885;">and Finances)</div>
<div class="t" style="left:366.8px;top:932.53px;font-size:10px;line-height:15px;font-weight:400;font-style:italic;letter-spacing:-0.133px;color:#6f7885;">ID: 0010710020801</div>
<div class="t" style="left:586.8px;top:895.94px;font-size:12px;line-height:18px;font-weight:400;letter-spacing:-0.058px;color:#424e66;">PT PJTEK Mandiri</div>
<div class="t" style="left:726.5px;top:895.94px;font-size:12px;line-height:18px;font-weight:400;letter-spacing:0.575px;color:#424e66;">085215659656</div>
<div class="t" style="left:859.5px;top:895.94px;font-size:12px;line-height:18px;font-weight:400;letter-spacing:0.755px;color:#424e66;">kosa.kreasi@gmail.com</div>
<div class="t" style="left:1101.2px;top:895.94px;font-size:12px;line-height:18px;font-weight:400;letter-spacing:0.678px;color:#424e66;">Directors</div>
<div class="badge" style="left:1255px;top:899.5px"></div>
<div class="t" style="left:1259.2px;top:898.28px;font-size:9px;line-height:14px;font-weight:700;letter-spacing:0.512px;color:#fff;">Active</div>
<div class="vbtn" style="left:266.4px;top:995.5px"><svg class="abs" style="left:4.5px;top:6px" width="11" height="11" viewBox="0 0 16 16"><circle cx="8" cy="8" r="7.6" fill="#222"/><path d="M3.4 6.5h4.7V3.6l4.5 4.4-4.5 4.4V9.5H3.4z" fill="#fff"/></svg></div>
<div class="dbtn" style="left:288px;top:995.5px"><svg class="abs" style="left:5.5px;top:6px" width="10" height="11" viewBox="0 0 10 11"><path d="M3.5 1V.3h3V1H10v1.4H0V1z" fill="#fff"/><path d="M1 3h8l-.6 8H1.6z" fill="#fff"/><path d="M3.6 4.4v5M5 4.4v5M6.4 4.4v5" stroke="#ff8fa0" stroke-width=".7"/></svg></div>
<div class="t" style="left:366.8px;top:963.64px;font-size:12px;line-height:18px;font-weight:400;letter-spacing:0.816px;color:#424e66;">Ajang Sopandi</div>
<div class="t" style="left:366.8px;top:983.63px;font-size:10px;line-height:15px;font-weight:400;font-style:italic;letter-spacing:0.472px;color:#6f7885;">Designation : Kordinator OS</div>
<div class="t" style="left:366.8px;top:1000.93px;font-size:10px;line-height:15px;font-weight:400;font-style:italic;letter-spacing:0.605px;color:#6f7885;">Sub Department : Kordinator</div>
<div class="t" style="left:366.8px;top:1018.24px;font-size:10px;line-height:15px;font-weight:400;font-style:italic;letter-spacing:0.631px;color:#6f7885;">OS(Operating System)</div>
<div class="t" style="left:366.8px;top:1035.54px;font-size:10px;line-height:15px;font-weight:400;font-style:italic;letter-spacing:-0.061px;color:#6f7885;">ID: 0030110012080</div>
<div class="t" style="left:586.8px;top:997.94px;font-size:12px;line-height:18px;font-weight:400;letter-spacing:-0.058px;color:#424e66;">PT PJTEK Mandiri</div>
<div class="t" style="left:726.5px;top:997.94px;font-size:12px;line-height:18px;font-weight:400;letter-spacing:0.233px;color:#424e66;">081808188982</div>
<div class="t" style="left:859.5px;top:997.94px;font-size:12px;line-height:18px;font-weight:400;letter-spacing:0.935px;color:#424e66;">ajang.sopandi@equinara.com</div>
<div class="t" style="left:1101.2px;top:997.94px;font-size:12px;line-height:18px;font-weight:400;letter-spacing:0.844px;color:#424e66;">Super Admin</div>
<div class="badge" style="left:1255px;top:1001.5px"></div>
<div class="t" style="left:1259.2px;top:1000.28px;font-size:9px;line-height:14px;font-weight:700;letter-spacing:0.512px;color:#fff;">Active</div>
<div class="vbtn" style="left:266.4px;top:1098.2px"><svg class="abs" style="left:4.5px;top:6px" width="11" height="11" viewBox="0 0 16 16"><circle cx="8" cy="8" r="7.6" fill="#222"/><path d="M3.4 6.5h4.7V3.6l4.5 4.4-4.5 4.4V9.5H3.4z" fill="#fff"/></svg></div>
<div class="dbtn" style="left:288px;top:1098.2px"><svg class="abs" style="left:5.5px;top:6px" width="10" height="11" viewBox="0 0 10 11"><path d="M3.5 1V.3h3V1H10v1.4H0V1z" fill="#fff"/><path d="M1 3h8l-.6 8H1.6z" fill="#fff"/><path d="M3.6 4.4v5M5 4.4v5M6.4 4.4v5" stroke="#ff8fa0" stroke-width=".7"/></svg></div>
<div class="t" style="left:366.8px;top:1067.39px;font-size:12px;line-height:18px;font-weight:400;letter-spacing:0.689px;color:#424e66;">Darwin Darwin</div>
<div class="t" style="left:366.8px;top:1087.38px;font-size:10px;line-height:15px;font-weight:400;font-style:italic;letter-spacing:0.452px;color:#6f7885;">Designation : GA</div>
<div class="t" style="left:366.8px;top:1104.68px;font-size:10px;line-height:15px;font-weight:400;font-style:italic;letter-spacing:0.643px;color:#6f7885;">Sub Department : GA(Human</div>
<div class="t" style="left:366.8px;top:1121.99px;font-size:10px;line-height:15px;font-weight:400;font-style:italic;letter-spacing:0.547px;color:#6f7885;">Resources)</div>
<div class="t" style="left:366.8px;top:1139.29px;font-size:10px;line-height:15px;font-weight:400;font-style:italic;letter-spacing:-0.139px;color:#6f7885;">ID: 0070210011758</div>
<div class="t" style="left:586.8px;top:1101.69px;font-size:12px;line-height:18px;font-weight:400;letter-spacing:-0.058px;color:#424e66;">PT PJTEK Mandiri</div>
<div class="t" style="left:726.5px;top:1101.69px;font-size:12px;line-height:18px;font-weight:400;letter-spacing:-0.021px;color:#424e66;">0217564619</div>
<div class="t" style="left:859.5px;top:1101.69px;font-size:12px;line-height:18px;font-weight:400;letter-spacing:0.755px;color:#424e66;">kosa.kreasi@gmail.com</div>
<div class="t" style="left:1101.2px;top:1101.69px;font-size:12px;line-height:18px;font-weight:400;letter-spacing:0.677px;color:#424e66;">Employee General</div>
<div class="badge" style="left:1255px;top:1105.2px"></div>
<div class="t" style="left:1259.2px;top:1104.03px;font-size:9px;line-height:14px;font-weight:700;letter-spacing:0.512px;color:#fff;">Active</div>
<div class="abs" style="left:580px;top:597.4px;width:137px;height:2.4px;background:#fff"></div>
<div class="abs" style="left:718px;top:597.4px;width:133px;height:2.4px;background:#fff"></div>
<div class="abs" style="left:852px;top:597.4px;width:242px;height:2.4px;background:#fff"></div>
<div class="abs" style="left:1095px;top:597.4px;width:152px;height:2.4px;background:#fff"></div>
<div class="abs" style="left:1257px;top:597.8px;width:31px;height:1.6px;background:#48bf87"></div>
<div class="t" style="left:257.0px;top:1176.64px;font-size:12px;line-height:18px;font-weight:400;letter-spacing:0.360px;color:#424e66;">Showing 1 to 7 of 7 entries</div>
<div class="abs" style="left:1182.5px;top:1171px;width:155px;height:30.7px;border:1px solid #dee2e6;border-radius:4px;background:#fff"></div>
<div class="abs" style="left:1258px;top:1171px;width:29px;height:30.7px;background:#0a7bff"></div>
<div class="t" style="left:1194.6px;top:1177.74px;font-size:12px;line-height:18px;font-weight:400;letter-spacing:0.500px;color:#6c757d;">Previous</div>
<div class="t" style="left:1269.5px;top:1177.74px;font-size:12px;line-height:18px;font-weight:400;letter-spacing:-2.844px;color:#fff;">1</div>
<div class="t" style="left:1298.4px;top:1177.74px;font-size:12px;line-height:18px;font-weight:400;letter-spacing:0.438px;color:#6c757d;">Next</div>
<div class="abs" style="left:230px;top:1257px;width:1136px;height:47px;background:#3f4d67"></div>
<div class="t lcd" style="left:245.0px;top:1271.64px;font-size:12px;line-height:18px;font-weight:700;letter-spacing:0.209px;color:#fff;">2024 © PJTEK Document Tracing System v1.1.6</div>
</div></body></html>
